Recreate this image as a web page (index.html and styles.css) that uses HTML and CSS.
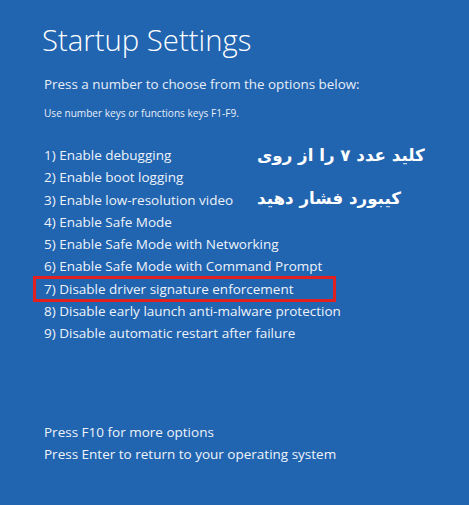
FILE: index.html
```html
<!DOCTYPE html>
<html lang="en">
<head>
  <meta charset="UTF-8" />
  <title>Startup Settings</title>
  <link rel="stylesheet" href="styles.css">
</head>
<body>
  <div class="screen">
    <h1>Startup Settings</h1>
    <p class="lead">Press a number to choose from the options below:</p>
    <p class="hint">Use number keys or functions keys F1-F9.</p>

    <ul class="options">
      <li>1) Enable debugging</li>
      <li>2) Enable boot logging</li>
      <li>3) Enable low-resolution video</li>
      <li>4) Enable Safe Mode</li>
      <li>5) Enable Safe Mode with Networking</li>
      <li>6) Enable Safe Mode with Command Prompt</li>
      <li class="marked">7) Disable driver signature enforcement</li>
      <li>8) Disable early launch anti-malware protection</li>
      <li>9) Disable automatic restart after failure</li>
    </ul>

    <div class="note" dir="rtl">
      <p>کلید عدد ۷ را از روی</p>
      <p>کیبورد فشار دهید</p>
    </div>

    <div class="footer">
      <p>Press F10 for more options</p>
      <p>Press Enter to return to your operating system</p>
    </div>
  </div>
</body>
</html>
```

FILE: styles.css
```css
html, body {
  margin: 0;
  height: 100%;
}
body {
  background-color: #2164b0;
  color: #fff;
  font-family: 'Open Sans', sans-serif;
}
.screen {
  position: relative;
  padding: 22px 0 0 42px;
  height: 100%;
  box-sizing: border-box;
}
h1 {
  margin: 0;
  font-size: 29.3px;
  font-weight: 300;
  line-height: 36px;
}
.lead {
  margin: 16px 0 0 2px;
  font-size: 13.4px;
  line-height: 20px;
  color: #e8eef7;
}
.hint {
  margin: 12px 0 0 2px;
  font-size: 10.1px;
  line-height: 14px;
  color: #e8eef7;
}
.options {
  list-style: none;
  margin: 24px 0 0 2px;
  padding: 0;
  font-size: 13.5px;
  line-height: 22.3px;
  color: #eef3fa;
}
.options li.marked {
  margin: -2px 0 -1.7px -11px;
  padding-left: 8px;
  width: 289px;
  border: 3px solid #e2201f;
  line-height: 20px;
}
.note {
  position: absolute;
  left: 257px;
  top: 143px;
  width: 175px;
  font-family: 'DejaVu Sans', sans-serif;
  font-weight: bold;
  font-size: 16.7px;
  text-align: left;
}
.note p {
  margin: 0 0 19px;
  line-height: 24px;
}
.footer {
  margin: 76px 0 0 2px;
  font-size: 13.5px;
  line-height: 22.6px;
  color: #eef3fa;
}
.footer p { margin: 0; }
```
